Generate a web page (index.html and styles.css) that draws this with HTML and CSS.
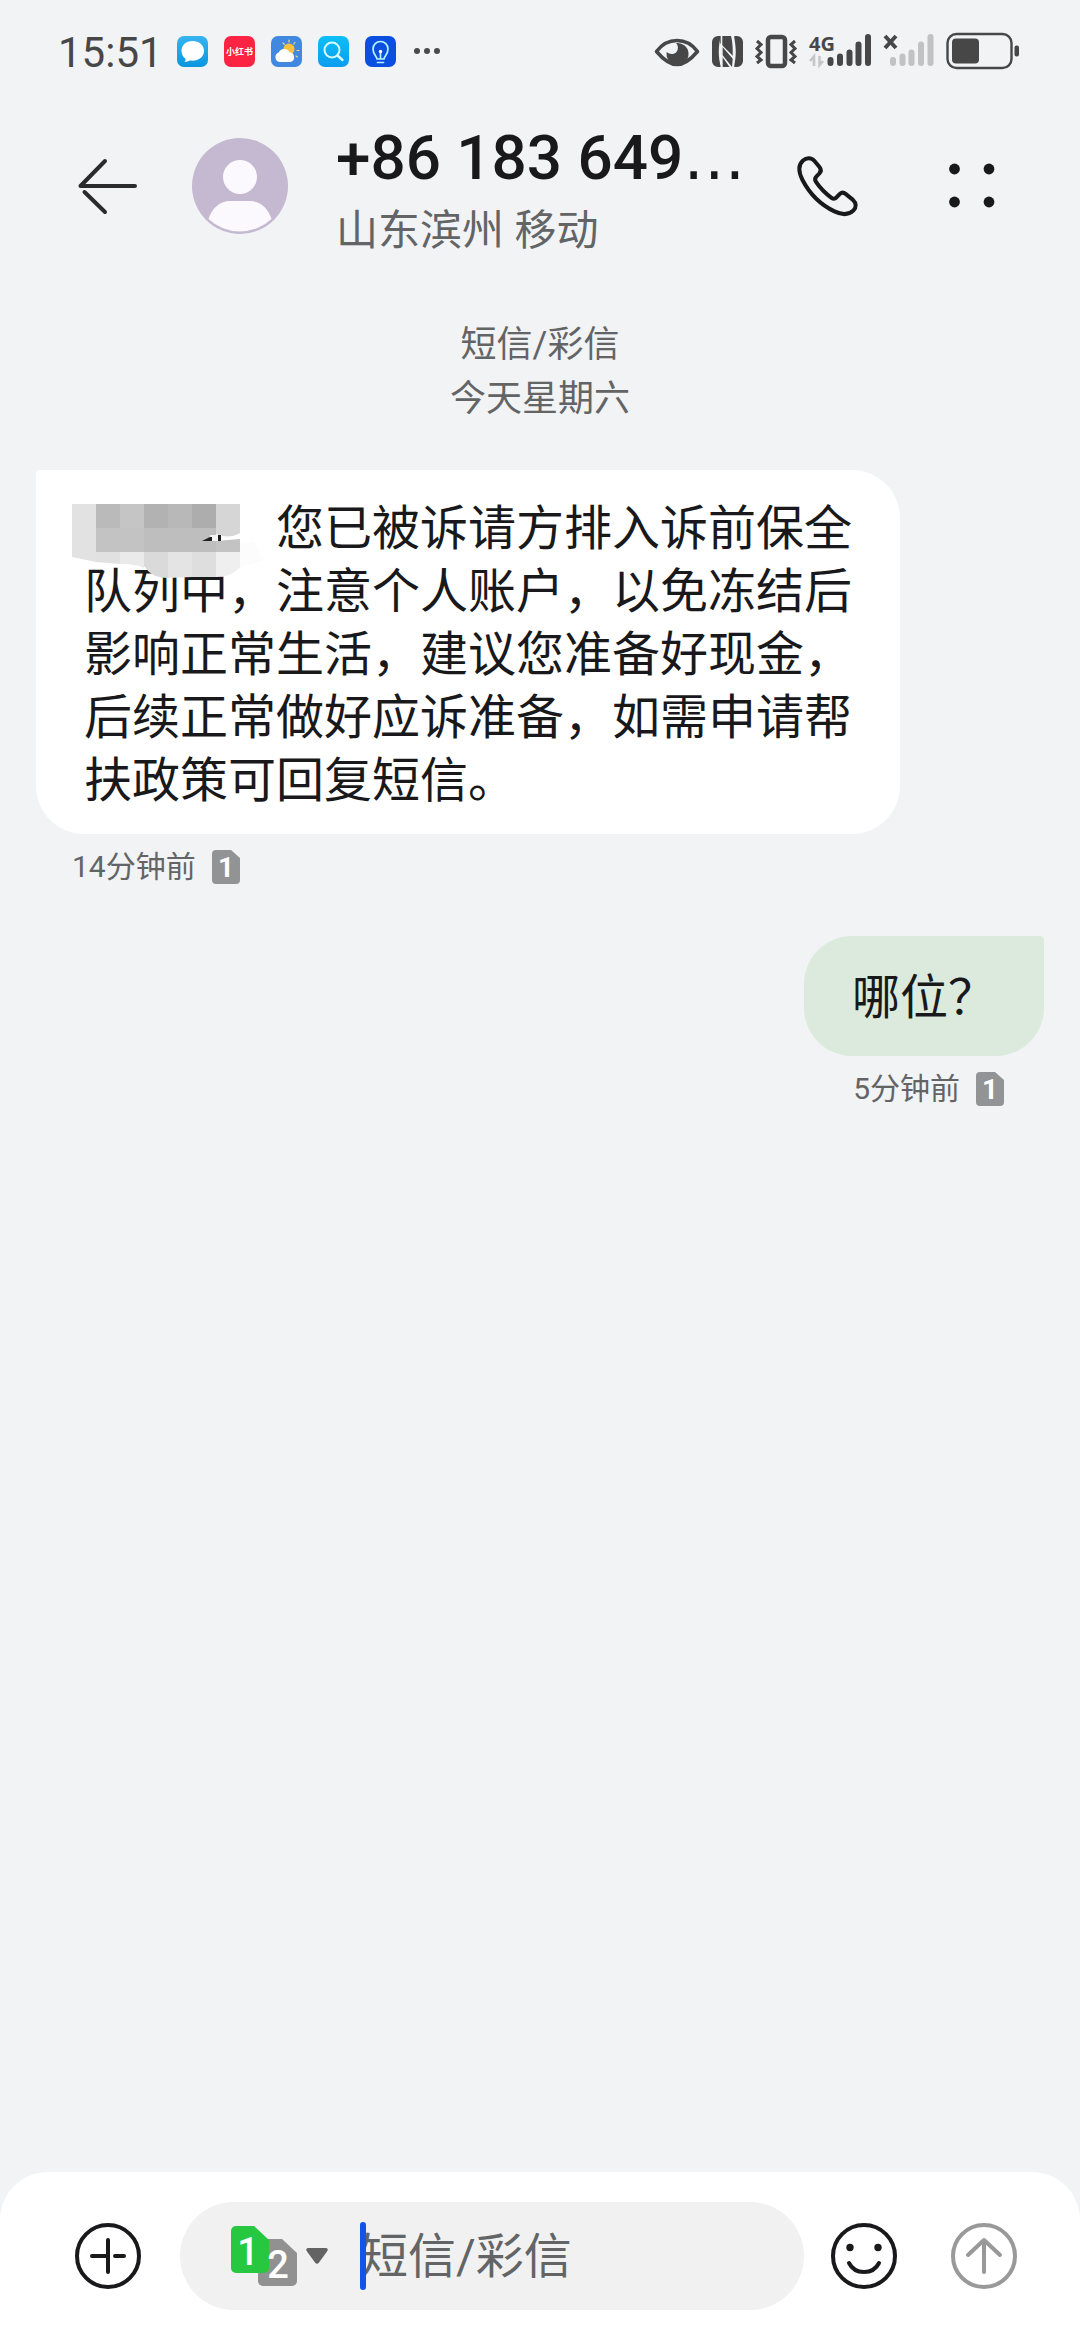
FILE: index.html
```html
<!DOCTYPE html>
<html lang="zh-CN">
<head>
<meta charset="utf-8">
<meta name="viewport" content="width=device-width, initial-scale=1">
<title>短信</title>
<link rel="stylesheet" href="styles.css">
</head>
<body>
<div class="screen">
  <div class="status">
    <div class="status-left">
      <time class="clock">15:51</time>
      <div class="apps">
        <svg width="31" height="31" viewBox="0 0 31 31" aria-hidden="true">
          <defs><linearGradient id="g1" x1="0" y1="0" x2="0" y2="1"><stop offset="0" stop-color="#38b4f0"/><stop offset="1" stop-color="#0a96e0"/></linearGradient></defs>
          <rect width="31" height="31" rx="7" fill="url(#g1)"/>
          <path d="M15.500 5C9 5 4.500 9 4.500 14.800c0 3.600 1.600 6.300 4 8 .3 1.200-.2 2.200-1 3.200 2.200 0 4-.5 5.500-1.400 8 1 14-3.200 14-9.800C27 9 22 5 15.500 5z" fill="#fff"/>
        </svg>
        <svg width="31" height="31" viewBox="0 0 31 31" aria-hidden="true">
          <rect width="31" height="31" rx="7" fill="#fc2442"/>
          <text x="15.500" y="19" class="tiny" text-anchor="middle">小红书</text>
        </svg>
        <svg width="31" height="31" viewBox="0 0 31 31" aria-hidden="true">
          <rect width="31" height="31" rx="7" fill="#4189e0"/>
          <g stroke="#f5d48a" stroke-width="1.200" stroke-linecap="round"><path d="M18 4v2M12 7l1.400 1.400M24 6.500l-1.200 1.500M26 14.500h2M25 20l1.300 1"/></g>
          <circle cx="18" cy="13" r="5.500" fill="#fdc33e"/>
          <path d="M8.500 26a5 5 0 0 1-.8-9.600 6 6 0 0 1 10.800-.2A5 5 0 0 1 19.500 26z" fill="#fff"/>
        </svg>
        <svg width="31" height="31" viewBox="0 0 31 31" aria-hidden="true">
          <defs><linearGradient id="g2" x1="0" y1="0" x2="0" y2="1"><stop offset="0" stop-color="#0cc0f5"/><stop offset="1" stop-color="#0a9cf0"/></linearGradient></defs>
          <rect width="31" height="31" rx="7" fill="url(#g2)"/>
          <circle cx="14" cy="14" r="7.500" fill="none" stroke="#d8fbff" stroke-width="2"/>
          <path d="M19.500 19.500l5 4.500" stroke="#d8fbff" stroke-width="2.400" stroke-linecap="round"/>
        </svg>
        <svg width="31" height="31" viewBox="0 0 31 31" aria-hidden="true">
          <rect width="31" height="31" rx="7" fill="#0b4fe0"/>
          <g fill="none" stroke="#b8f1ff" stroke-width="1.700" stroke-linecap="round" stroke-linejoin="round"><path d="M12 23c0-2.500-4-4.500-4-10a7.500 7.500 0 0 1 15 0c0 5.500-4 7.500-4 10zM12.500 26.500h6M15.500 16.500V23"/></g>
          <circle cx="15.500" cy="15.500" r="1.700" fill="#fff"/>
        </svg>
      </div>
      <svg width="26" height="6" viewBox="0 0 26 6" fill="#4a4a4a" aria-hidden="true"><circle cx="3" cy="3" r="3"/><circle cx="13" cy="3" r="3"/><circle cx="23" cy="3" r="3"/></svg>
    </div>
    <div class="status-right">
      <svg width="46" height="38" viewBox="0 0 46 38" aria-hidden="true">
        <path d="M2.500 19.500C8 12 15 8.500 23 8.500s15 3.500 20.500 11C38 26 31 32.500 23 32.500S8 26 2.500 19.500z" fill="none" stroke="#474747" stroke-width="3.600" stroke-linejoin="round"/>
        <path d="M22 11a11 11 0 1 1-9.300 9c2.500 2.500 7 2.600 9.300.5 2.600-2.500 2.500-7 0-9.500z" fill="#474747"/>
      </svg>
      <svg width="31" height="38" viewBox="0 0 31 38" aria-hidden="true">
        <path d="M6 4h3C6 14 6 26 9 35H6a6 6 0 0 1-6-6V10a6 6 0 0 1 6-6zM25 35h-3.500c3-9 3-21 0-31H25a6 6 0 0 1 6 6v19a6 6 0 0 1-6 6z" fill="#474747"/>
        <path d="M8 4h11c1.500 6 2.500 14 2 20L8 11zM10.500 15l10.500 12-1 8-9.500-12zM10.500 25l7 10h-7z" fill="#474747"/>
        <path d="M9.500 4v31M21.500 4v31" stroke="#f1f3f5" stroke-width="1.600"/>
      </svg>
      <svg width="42" height="38" viewBox="0 0 42 38" fill="none" stroke="#474747" aria-hidden="true">
        <rect x="13" y="5" width="17" height="29" rx="3" stroke-width="4.500"/>
        <path d="M2 9l4 3.500-4 4 4 4-4 4 4 3.500-4 3M40 9l-4 3.500 4 4-4 4 4 4-4 3.500 4 3" stroke-width="3"/>
      </svg>
      <svg width="62" height="38" viewBox="0 0 62 38" aria-hidden="true">
        <text x="0" y="19" class="net">4G</text>
        <g stroke="#474747" stroke-width="6" stroke-linecap="round"><path d="M21.500 28v3M31 24.500V31M40.500 20.500V31M49.500 12.500V31M59 5v26"/></g>
        <path d="M1 29l4-4.500V34M14 29l-3.500 4V24" fill="none" stroke="#c6c6c8" stroke-width="2.600"/>
      </svg>
      <svg width="51" height="38" viewBox="0 0 51 38" aria-hidden="true">
        <path d="M2 4l11 12M13 4L2 16" stroke="#474747" stroke-width="4"/>
        <g stroke="#c2c2c4" stroke-width="6" stroke-linecap="round"><path d="M10 28v3M19.500 24.500V31M28.500 20.500V31M38 12.500V31M47.500 5v26"/></g>
      </svg>
      <svg width="74" height="38" viewBox="0 0 74 38" aria-hidden="true">
        <rect x="1.500" y="2" width="64" height="34" rx="9" fill="none" stroke="#474747" stroke-width="2.400"/>
        <rect x="6" y="6.500" width="27" height="25" rx="4" fill="#474747"/>
        <rect x="68.500" y="13.500" width="4.500" height="11" rx="2" fill="#474747"/>
      </svg>
    </div>
  </div>

  <header class="header">
    <button class="icon-btn" type="button" aria-label="返回">
      <svg width="72" height="72" viewBox="0 0 72 72" fill="none" stroke="#2b2b2d" stroke-width="4" stroke-linecap="round" stroke-linejoin="round"><path d="M63 36H8.500L33 11M12.500 42L33 62"/></svg>
    </button>
    <svg class="avatar" width="96" height="96" viewBox="0 0 96 96" aria-hidden="true">
      <circle cx="48" cy="48" r="48" fill="#c4b9d1"/>
      <circle cx="48" cy="39" r="17" fill="#fbf9fd"/>
      <path d="M16.500 81C20 70 28 63 38 63h20c10 0 18 7 21.500 18A46 46 0 0 1 16.500 81z" fill="#fbf9fd"/>
    </svg>
    <div class="contact">
      <h1 class="number">+86 183 649<span class="more">…</span></h1>
      <p class="region">山东滨州 移动</p>
    </div>
    <div class="actions">
      <button class="icon-btn" type="button" aria-label="拨打电话">
        <svg width="72" height="72" viewBox="0 0 72 72" fill="none" stroke="#19191b" stroke-width="4" stroke-linejoin="round"><path d="M11 10.500c3.500-3 8.500-3 11.500.5l5 6c2 2.500 1.800 4.500-.3 6.700l-2.700 2.700c-1.800 1.800-1.800 3.500-.5 5.500 4 6 9.500 11.500 15.500 16 1.800 1.300 3.500 1.200 5-.5l2.800-3c1.800-2 4.200-2.200 6.300-.5l7.400 6c3.400 3 3.500 7.500.5 10.500-5 4.800-11 5-19 1C28 54.500 17.500 43.500 10.500 30 6.500 22 6 15 11 10.500z"/></svg>
      </button>
      <button class="icon-btn" type="button" aria-label="更多">
        <svg width="72" height="72" viewBox="0 0 72 72" fill="#19191b"><circle cx="18.500" cy="19" r="5.400"/><circle cx="53" cy="19" r="5.400"/><circle cx="18.500" cy="52" r="5.400"/><circle cx="53" cy="52" r="5.400"/></svg>
      </button>
    </div>
  </header>

  <main class="thread">
    <div class="day">
      <p>短信/彩信</p>
      <p>今天星期六</p>
    </div>

    <article class="message">
      <p class="bubble"><span class="redacted"><svg class="mosaic" width="192" height="78" viewBox="0 0 192 78" aria-hidden="true">
        <path d="M0 0h24v58L0 53z" fill="#e2e2e2"/>
        <path d="M24 0h24v48H24z" fill="#bababa"/><path d="M48 0h24v48H48z" fill="#c5c5c5"/>
        <path d="M72 0h24v48H72z" fill="#b2b2b2"/><path d="M96 0h24v48H96z" fill="#b8b8b8"/>
        <path d="M120 0h24v48h-24z" fill="#adadad"/><path d="M144 0h24v29c-8 5-18 4-24 1z" fill="#d6d6d6"/>
        <path d="M24 24h48v24H24zM144 37l24-2v13h-24z" fill="#c3c3c3"/><path d="M72 24h72v24H72z" fill="#bebebe"/>
        <path d="M24 48h24v12l-24-2z" fill="#e1e1e1"/><path d="M48 48h24v16c-6-3-12-4-24-4z" fill="#eaeaea"/>
        <path d="M72 48h24v26c-10 0-18-3-24-12z" fill="#dadada"/><path d="M96 48h24v25l-24 1z" fill="#e4e4e4"/>
        <path d="M120 48h24v25h-24z" fill="#dedede"/><path d="M144 48h24v15c-6 7-14 10-24 10z" fill="#efefef"/>
        <path d="M168 40l14-2 10 18-24 7z" fill="#fcfcfc"/>
        <path d="M138 31h12v6h-12z" fill="#f4f4f4"/>
        <path d="M130 37l8-4h2v4zM146 31h3v6h-3z" fill="#1f1f1f"/>
      </svg></span>您已被诉请方排入诉前保全队列中，注意个人账户，以免冻结后影响正常生活，建议您准备好现金，后续正常做好应诉准备，如需申请帮扶政策可回复短信。</p>
      <div class="meta"><time>14分钟前</time><svg width="28" height="34" viewBox="0 0 28 34" role="img" aria-label="卡1"><path d="M4 0h15l9 8v22a4 4 0 0 1-4 4H4a4 4 0 0 1-4-4V4a4 4 0 0 1 4-4z" fill="#929394"/><text x="14" y="27" class="sim-s" text-anchor="middle">1</text></svg></div>
    </article>

    <article class="message sent">
      <p class="bubble">哪位？</p>
      <div class="meta"><time>5分钟前</time><svg width="28" height="34" viewBox="0 0 28 34" role="img" aria-label="卡1"><path d="M4 0h15l9 8v22a4 4 0 0 1-4 4H4a4 4 0 0 1-4-4V4a4 4 0 0 1 4-4z" fill="#929394"/><text x="14" y="27" class="sim-s" text-anchor="middle">1</text></svg></div>
    </article>
  </main>

  <form class="composer">
    <button class="icon-btn" type="button" aria-label="添加">
      <svg width="72" height="72" viewBox="0 0 72 72" fill="none" stroke="#19191b" stroke-width="4" stroke-linecap="round"><circle cx="36" cy="36" r="31"/><path d="M36 20v32M20 36h16M43 36h9"/></svg>
    </button>
    <div class="field">
      <button class="sim" type="button" aria-label="选择卡">
        <svg width="66" height="60" viewBox="0 0 66 60" aria-hidden="true">
          <path d="M32 13h19l15 14v28a5 5 0 0 1-5 5H32a5 5 0 0 1-5-5V18a5 5 0 0 1 5-5z" fill="#919192"/>
          <path d="M5 0h18l15 14v28a5 5 0 0 1-5 5H5a5 5 0 0 1-5-5V5a5 5 0 0 1 5-5z" fill="#27c840"/>
          <text x="17" y="39" class="sim-l" text-anchor="middle">1</text>
          <text x="47" y="52" class="sim-l" text-anchor="middle">2</text>
        </svg>
        <svg width="22" height="16" viewBox="0 0 22 16" aria-hidden="true"><path d="M2 0h18q3 .5 1 3.500l-8 11q-2 2.500-4 0L1 3.500Q-1 .5 2 0z" fill="#636363"/></svg>
      </button>
      <div class="entry">
        <input type="text" placeholder="短信/彩信" aria-label="短信/彩信">
        <span class="cursor"></span>
      </div>
    </div>
    <button class="icon-btn" type="button" aria-label="表情">
      <svg width="72" height="72" viewBox="0 0 72 72" fill="none" stroke="#19191b" stroke-width="4" stroke-linecap="round"><circle cx="36" cy="36" r="31"/><path d="M21 43c6 12 24 12 30 0"/><g fill="#19191b" stroke="none"><circle cx="22" cy="27.500" r="3.700"/><circle cx="50" cy="27.500" r="3.700"/></g></svg>
    </button>
    <button class="icon-btn send" type="submit" aria-label="发送">
      <svg width="72" height="72" viewBox="0 0 72 72" fill="none" stroke="#99999a" stroke-width="4" stroke-linecap="round" stroke-linejoin="round"><circle cx="36" cy="36" r="31"/><path d="M36 52V20M20 35l16-15 16 15"/></svg>
    </button>
  </form>
</div>
</body>
</html>
```
FILE: styles.css
```css
* { box-sizing: border-box; }

body {
  margin: 0;
  background: #f1f3f5;
  color: #19191b;
  font-family: Roboto, "Noto Sans CJK SC", sans-serif;
}

h1, p { margin: 0; }
svg { display: block; flex: none; overflow: visible; }

button {
  margin: 0;
  padding: 0;
  border: 0;
  background: none;
}

.screen {
  display: flex;
  flex-direction: column;
  min-height: 100vh;
}

/* Status bar */
.status {
  display: flex;
  align-items: center;
  justify-content: space-between;
  height: 102px;
  padding: 0 60px 0 58px;
}

.status-left,
.status-right {
  display: flex;
  align-items: center;
}

.status-left { gap: 14px; }
.status-right { gap: 12px; }
.apps { display: flex; gap: 16px; }
.status-left > svg { margin-left: 4px; }

.clock {
  padding-top: 4px;
  color: #474747;
  font-size: 42px;
  line-height: 48px;
}

.tiny {
  fill: #fff;
  font: 700 9px "Noto Sans CJK SC", sans-serif;
}

.net {
  fill: #474747;
  font: 700 20px "Open Sans", sans-serif;
}

/* Header */
.header {
  display: flex;
  align-items: center;
  gap: 48px;
  height: 168px;
  padding: 0 72px;
}

.icon-btn {
  flex: none;
  width: 72px;
  height: 72px;
}

.contact {
  flex: 1;
  min-width: 0;
  padding-top: 12px;
  white-space: nowrap;
}

.number {
  font-size: 62px;
  font-weight: 500;
  line-height: 78px;
}

.more { font-family: "DejaVu Sans", sans-serif; }

.region {
  color: #636466;
  font-size: 42px;
  line-height: 68px;
}

.actions {
  display: flex;
  gap: 72px;
}

/* Conversation */
.thread {
  flex: 1;
  display: flex;
  flex-direction: column;
  padding: 48px 36px;
}

.day {
  margin-bottom: 44px;
  color: #636466;
  font-size: 36px;
  line-height: 54px;
  text-align: center;
}

.message {
  display: flex;
  flex-direction: column;
  align-items: flex-start;
  margin-bottom: 36px;
}

.sent { align-items: flex-end; }

.bubble {
  max-width: 864px;
  padding: 27px 48px 22px;
  border-radius: 4px 48px 48px 48px;
  background: #fff;
  font-size: 48px;
  line-height: 63px;
}

.sent .bubble {
  padding: 30px 48px 27px;
  border-radius: 48px 4px 48px 48px;
  background: #dceadd;
}

.redacted {
  position: relative;
  display: inline-block;
  width: 192px;
  height: 36px;
}

.mosaic {
  position: absolute;
  top: -5px;
  left: -12px;
}

.meta {
  display: flex;
  align-items: center;
  gap: 16px;
  height: 66px;
  padding: 0 40px 0 36px;
  color: #636466;
  font-size: 30px;
  line-height: 36px;
}

.sim-s {
  fill: #fff;
  font: 700 28px Roboto, sans-serif;
}

/* Composer */
.composer {
  display: flex;
  align-items: center;
  gap: 24px;
  padding: 30px 60px 30px 72px;
  border-radius: 48px 48px 0 0;
  background: #fff;
}

.field {
  flex: 1;
  display: flex;
  align-items: center;
  gap: 32px;
  min-width: 0;
  height: 108px;
  margin-left: 12px;
  padding: 0 48px 0 51px;
  border-radius: 54px;
  background: #f1f1f1;
}

.sim {
  flex: none;
  display: flex;
  align-items: center;
  gap: 9px;
}

.sim-l {
  fill: #fff;
  font: 500 38px Roboto, sans-serif;
}

.entry {
  position: relative;
  flex: 1;
  min-width: 0;
}

.entry input {
  display: block;
  width: 100%;
  height: 72px;
  padding: 0;
  border: 0;
  outline: 0;
  background: none;
  color: #19191b;
  font: 48px Roboto, "Noto Sans CJK SC", sans-serif;
}

.entry input::placeholder {
  color: #636466;
  opacity: 1;
}

.cursor {
  position: absolute;
  top: 2px;
  left: 0;
  width: 6px;
  height: 68px;
  border-radius: 3px;
  background: #1056e6;
}

.send { margin-left: 24px; }
```
